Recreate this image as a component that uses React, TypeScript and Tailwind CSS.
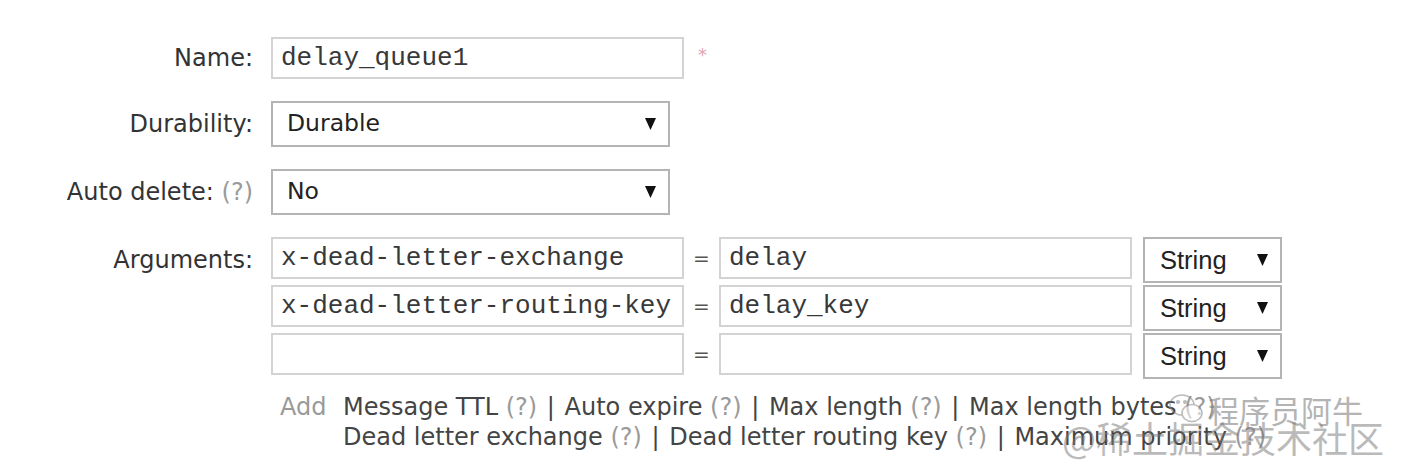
import React from "react";

const Tri = () => (
  <svg width="11" height="12" viewBox="0 0 11 12" className="shrink-0">
    <polygon points="0,0 11,0 5.5,12" fill="#111" />
  </svg>
);

const Input = ({ value, w = "w-[413px]" }: { value?: string; w?: string }) => (
  <div
    className={`${w} h-[42px] border-2 border-[#d3d3d3] bg-white flex items-center pl-[8px] text-[26px] text-[#383838] leading-none`}
    style={{ fontFamily: '"Liberation Mono", "Courier New", monospace' }}
  >
    {value}
  </div>
);

const BigSelect = ({ value }: { value: string }) => (
  <div className="w-[399px] h-[46px] border-2 border-[#b4b4b4] bg-white flex items-center justify-between pl-[14px] pr-[12px] text-[23.5px] text-[#222]">
    <span>{value}</span>
    <Tri />
  </div>
);

const TypeSelect = () => (
  <div
    className="w-[139px] h-[46px] border-2 border-[#b4b4b4] bg-white flex items-center justify-between pl-[15px] pr-[12px] text-[25.5px] text-[#222]"
    style={{ fontFamily: '"Liberation Sans", Arial, sans-serif' }}
  >
    <span>String</span>
    <Tri />
  </div>
);

const Label = ({ children, tall }: { children: React.ReactNode; tall?: boolean }) => (
  <div className={`flex justify-end items-center ${tall ? "h-[46px] self-start" : ""} text-[24px] text-[#333] whitespace-nowrap`}>
    {children}
  </div>
);

const Q = () => <span className="text-[#9a9a9a]">(?)</span>;
const Sep = () => <span className="mx-[2px]"> | </span>;

const ArgRow = ({ k, v }: { k?: string; v?: string }) => (
  <div className="flex items-start">
    <Input value={k} />
    <div className="w-[35px] h-[42px] flex items-center justify-center text-[20px] text-[#555]">=</div>
    <Input value={v} />
    <div className="ml-[11px]">
      <TypeSelect />
    </div>
  </div>
);

export default function App() {
  return (
    <div
      className="relative w-[1402px] h-[474px] bg-white overflow-hidden"
      style={{ fontFamily: '"DejaVu Sans", Verdana, sans-serif' }}
    >
      <div className="pt-[37px] grid grid-cols-[253px_auto] gap-x-[18px] gap-y-[22px]">
        <Label>Name:</Label>
        <div className="flex items-start">
          <Input value="delay_queue1" />
          <span className="ml-[14px] mt-[4px] text-[18px] text-[#e0a3b3]">*</span>
        </div>

        <Label>Durability:</Label>
        <div>
          <BigSelect value="Durable" />
        </div>

        <Label>
          Auto delete:&nbsp;<Q />
        </Label>
        <div>
          <BigSelect value="No" />
        </div>

        <Label tall>Arguments:</Label>
        <div className="flex flex-col">
          <div className="flex flex-col gap-[2px]">
            <ArgRow k="x-dead-letter-exchange" v="delay" />
            <ArgRow k="x-dead-letter-routing-key" v="delay_key" />
            <ArgRow />
          </div>
          <div className="mt-[13px] flex text-[24px] leading-[30px] text-[#444] whitespace-pre">
            <span className="pl-[9px] w-[72px] text-[#999]">Add</span>
            <div className="flex flex-col">
              <div>
                Message TTL <Q /><Sep />Auto expire <Q /><Sep />Max length <Q /><Sep />Max length bytes <Q />
              </div>
              <div>
                Dead letter exchange <Q /><Sep />Dead letter routing key <Q /><Sep />Maximum priority <Q />
              </div>
            </div>
          </div>
        </div>
      </div>

      {/* watermark overlay */}
      <div className="absolute left-[1168px] top-[392px] flex items-center gap-[4px] opacity-55 text-[#777]">
        <svg width="36" height="34" viewBox="0 0 36 34" fill="none" stroke="#888" strokeWidth="1.6">
          <ellipse cx="14" cy="13" rx="12" ry="10" />
          <ellipse cx="24" cy="21" rx="10" ry="8.5" fill="white" />
          <circle cx="10" cy="10" r="1.3" fill="#888" />
          <circle cx="17" cy="10" r="1.3" fill="#888" />
        </svg>
        <span
          className="text-[31px] leading-none"
          style={{ fontFamily: '"Noto Sans CJK SC", sans-serif' }}
        >
          程序员阿牛
        </span>
      </div>
      <div
        className="absolute left-[1062px] top-[419px] text-[36px] leading-none text-[#777] opacity-50"
        style={{ fontFamily: '"Noto Sans CJK SC", sans-serif' }}
      >
        @稀土掘金技术社区
      </div>
    </div>
  );
}
